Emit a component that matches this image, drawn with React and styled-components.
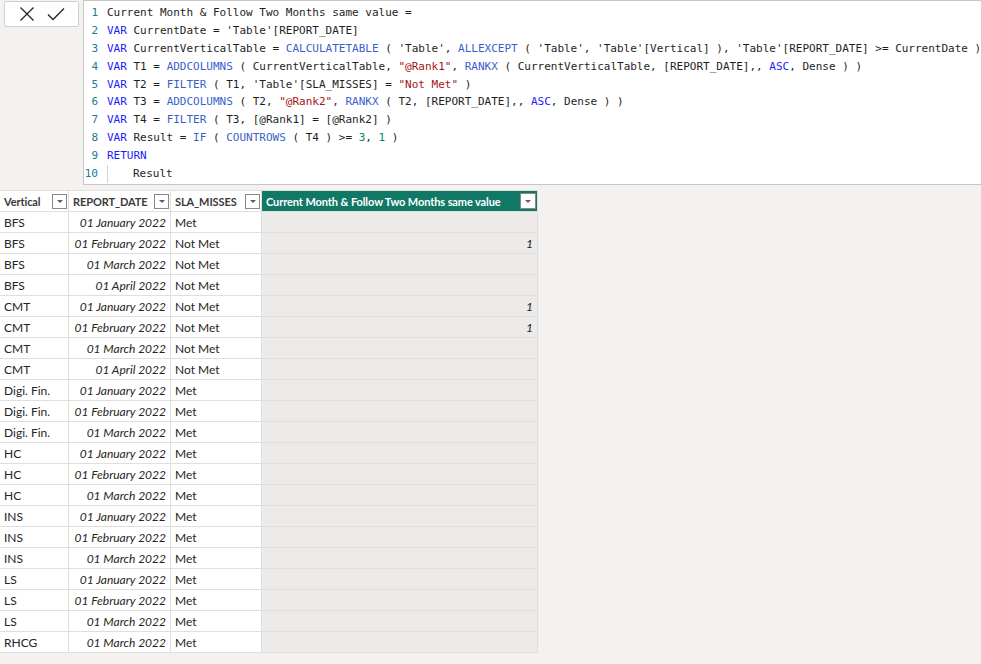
import React from 'react';
import styled, { createGlobalStyle } from 'styled-components';

const GlobalStyle = createGlobalStyle`
  body {
    margin: 0;
    background: #f3f2f1;
    font-family: Lato, 'Noto Sans', sans-serif;
  }
`;

const Page = styled.div`
  width: 981px;
  height: 664px;
  overflow: hidden;
  display: flex;
  flex-direction: column;
`;

const FormulaBar = styled.div`
  display: flex;
  align-items: flex-start;
  height: 186px;
  padding-left: 4px;
  box-sizing: border-box;
`;

const ActionBox = styled.div`
  display: flex;
  align-items: center;
  justify-content: center;
  gap: 12px;
  width: 75px;
  height: 26px;
  margin-top: 1px;
  background: #ffffff;
  border: 1px solid #d2d0ce;
  border-radius: 2px;
  box-sizing: border-box;
`;

const Editor = styled.div`
  flex: 1;
  height: 185px;
  margin-left: 4px;
  background: #ffffff;
  border: 1px solid #c8c6c4;
  border-right: none;
  box-sizing: border-box;
  padding-top: 3px;
  font-family: 'DejaVu Sans Mono', 'Liberation Mono', monospace;
  font-size: 11px;
  overflow: hidden;
`;

const CodeLine = styled.div`
  display: flex;
  align-items: stretch;
  height: 17.9px;
  line-height: 17.9px;
  white-space: pre;
  color: #1e1e1e;
`;

const LineNo = styled.span`
  width: 14px;
  text-align: right;
  color: #237893;
  flex-shrink: 0;
`;

const Gutter = styled.span`
  width: 9px;
  flex-shrink: 0;
`;

const Indent = styled.span`
  width: 26px;
  flex-shrink: 0;
  border-left: 1px solid #d3d3d3;
  box-sizing: border-box;
`;

const Kw = styled.span`
  color: #1a1aff;
`;
const Fn = styled.span`
  color: #3a5fcd;
`;
const Str = styled.span`
  color: #a31515;
`;
const Num = styled.span`
  color: #098658;
`;

const Grid = styled.div`
  margin-top: 4px;
  display: grid;
  grid-template-columns: 68px 101px 90px 275px;
  gap: 1px;
  background: #e1dfdd;
  border: 1px solid #e1dfdd;
  border-left: none;
  width: max-content;
`;

const HeadCell = styled.div`
  height: 20px;
  min-width: 0;
  display: flex;
  align-items: center;
  justify-content: space-between;
  gap: 2px;
  padding: 0 1px 0 4px;
  background: ${p => (p.$accent ? '#117865' : '#ffffff')};
  color: ${p => (p.$accent ? '#ffffff' : '#3b3a39')};
  font-size: 11px;
  font-weight: 700;
  letter-spacing: -0.1px;
  white-space: nowrap;
`;

const FilterBtn = styled.span`
  width: ${p => (p.$accent ? 16 : 15)}px;
  height: ${p => (p.$accent ? 16 : 15)}px;
  box-sizing: border-box;
  background: #ffffff;
  border: 1px solid #8a8886;
  display: flex;
  align-items: center;
  justify-content: center;
  flex-shrink: 0;

  &::after {
    content: '';
    border-left: 3px solid transparent;
    border-right: 3px solid transparent;
    border-top: 3px solid #605e5c;
  }
`;

const Cell = styled.div`
  height: 20px;
  min-width: 0;
  display: flex;
  align-items: center;
  justify-content: ${p => (p.$right ? 'flex-end' : 'flex-start')};
  padding: 0 4px;
  background: ${p => (p.$calc ? '#edebe9' : '#ffffff')};
  color: #252423;
  font-size: 12px;
  font-style: ${p => (p.$italic ? 'italic' : 'normal')};
  white-space: nowrap;
`;

const rows = [
  ['BFS', '01 January 2022', 'Met', ''],
  ['BFS', '01 February 2022', 'Not Met', '1'],
  ['BFS', '01 March 2022', 'Not Met', ''],
  ['BFS', '01 April 2022', 'Not Met', ''],
  ['CMT', '01 January 2022', 'Not Met', '1'],
  ['CMT', '01 February 2022', 'Not Met', '1'],
  ['CMT', '01 March 2022', 'Not Met', ''],
  ['CMT', '01 April 2022', 'Not Met', ''],
  ['Digi. Fin.', '01 January 2022', 'Met', ''],
  ['Digi. Fin.', '01 February 2022', 'Met', ''],
  ['Digi. Fin.', '01 March 2022', 'Met', ''],
  ['HC', '01 January 2022', 'Met', ''],
  ['HC', '01 February 2022', 'Met', ''],
  ['HC', '01 March 2022', 'Met', ''],
  ['INS', '01 January 2022', 'Met', ''],
  ['INS', '01 February 2022', 'Met', ''],
  ['INS', '01 March 2022', 'Met', ''],
  ['LS', '01 January 2022', 'Met', ''],
  ['LS', '01 February 2022', 'Met', ''],
  ['LS', '01 March 2022', 'Met', ''],
  ['RHCG', '01 March 2022', 'Met', ''],
];

const code = [
  <>Current Month &amp; Follow Two Months same value =</>,
  <><Kw>VAR</Kw> CurrentDate = 'Table'[REPORT_DATE]</>,
  <><Kw>VAR</Kw> CurrentVerticalTable = <Fn>CALCULATETABLE</Fn> ( 'Table', <Fn>ALLEXCEPT</Fn> ( 'Table', 'Table'[Vertical] ), 'Table'[REPORT_DATE] &gt;= CurrentDate )</>,
  <><Kw>VAR</Kw> T1 = <Fn>ADDCOLUMNS</Fn> ( CurrentVerticalTable, <Str>"@Rank1"</Str>, <Fn>RANKX</Fn> ( CurrentVerticalTable, [REPORT_DATE],, <Kw>ASC</Kw>, Dense ) )</>,
  <><Kw>VAR</Kw> T2 = <Fn>FILTER</Fn> ( T1, 'Table'[SLA_MISSES] = <Str>"Not Met"</Str> )</>,
  <><Kw>VAR</Kw> T3 = <Fn>ADDCOLUMNS</Fn> ( T2, <Str>"@Rank2"</Str>, <Fn>RANKX</Fn> ( T2, [REPORT_DATE],, <Kw>ASC</Kw>, Dense ) )</>,
  <><Kw>VAR</Kw> T4 = <Fn>FILTER</Fn> ( T3, [@Rank1] = [@Rank2] )</>,
  <><Kw>VAR</Kw> Result = <Fn>IF</Fn> ( <Fn>COUNTROWS</Fn> ( T4 ) &gt;= <Num>3</Num>, <Num>1</Num> )</>,
  <><Kw>RETURN</Kw></>,
  null,
];

const CrossIcon = () => (
  <svg width="16" height="16" viewBox="0 0 16 16">
    <path d="M1.5 1.5 L14.5 14.5 M14.5 1.5 L1.5 14.5" stroke="#252423" strokeWidth="1.3" fill="none" />
  </svg>
);

const CheckIcon = () => (
  <svg width="18" height="14" viewBox="0 0 18 14">
    <path d="M1 7.5 L6 12.5 L17 1.5" stroke="#252423" strokeWidth="1.3" fill="none" />
  </svg>
);

const headers = ['Vertical', 'REPORT_DATE', 'SLA_MISSES'];

export default function App() {
  return (
    <Page>
      <GlobalStyle />
      <FormulaBar>
        <ActionBox>
          <CrossIcon />
          <CheckIcon />
        </ActionBox>
        <Editor>
          {code.map((line, i) => (
            <CodeLine key={i}>
              <LineNo>{i + 1}</LineNo>
              <Gutter />
              {line ? <span>{line}</span> : (<><Indent /><span>Result</span></>)}
            </CodeLine>
          ))}
        </Editor>
      </FormulaBar>
      <Grid>
        {headers.map(h => (
          <HeadCell key={h}>
            <span>{h}</span>
            <FilterBtn />
          </HeadCell>
        ))}
        <HeadCell $accent>
          <span>Current Month &amp; Follow Two Months same value</span>
          <FilterBtn $accent />
        </HeadCell>
        {rows.map((r, i) => (
          <React.Fragment key={i}>
            <Cell>{r[0]}</Cell>
            <Cell $right $italic>{r[1]}</Cell>
            <Cell>{r[2]}</Cell>
            <Cell $calc $right $italic>{r[3]}</Cell>
          </React.Fragment>
        ))}
      </Grid>
    </Page>
  );
}
